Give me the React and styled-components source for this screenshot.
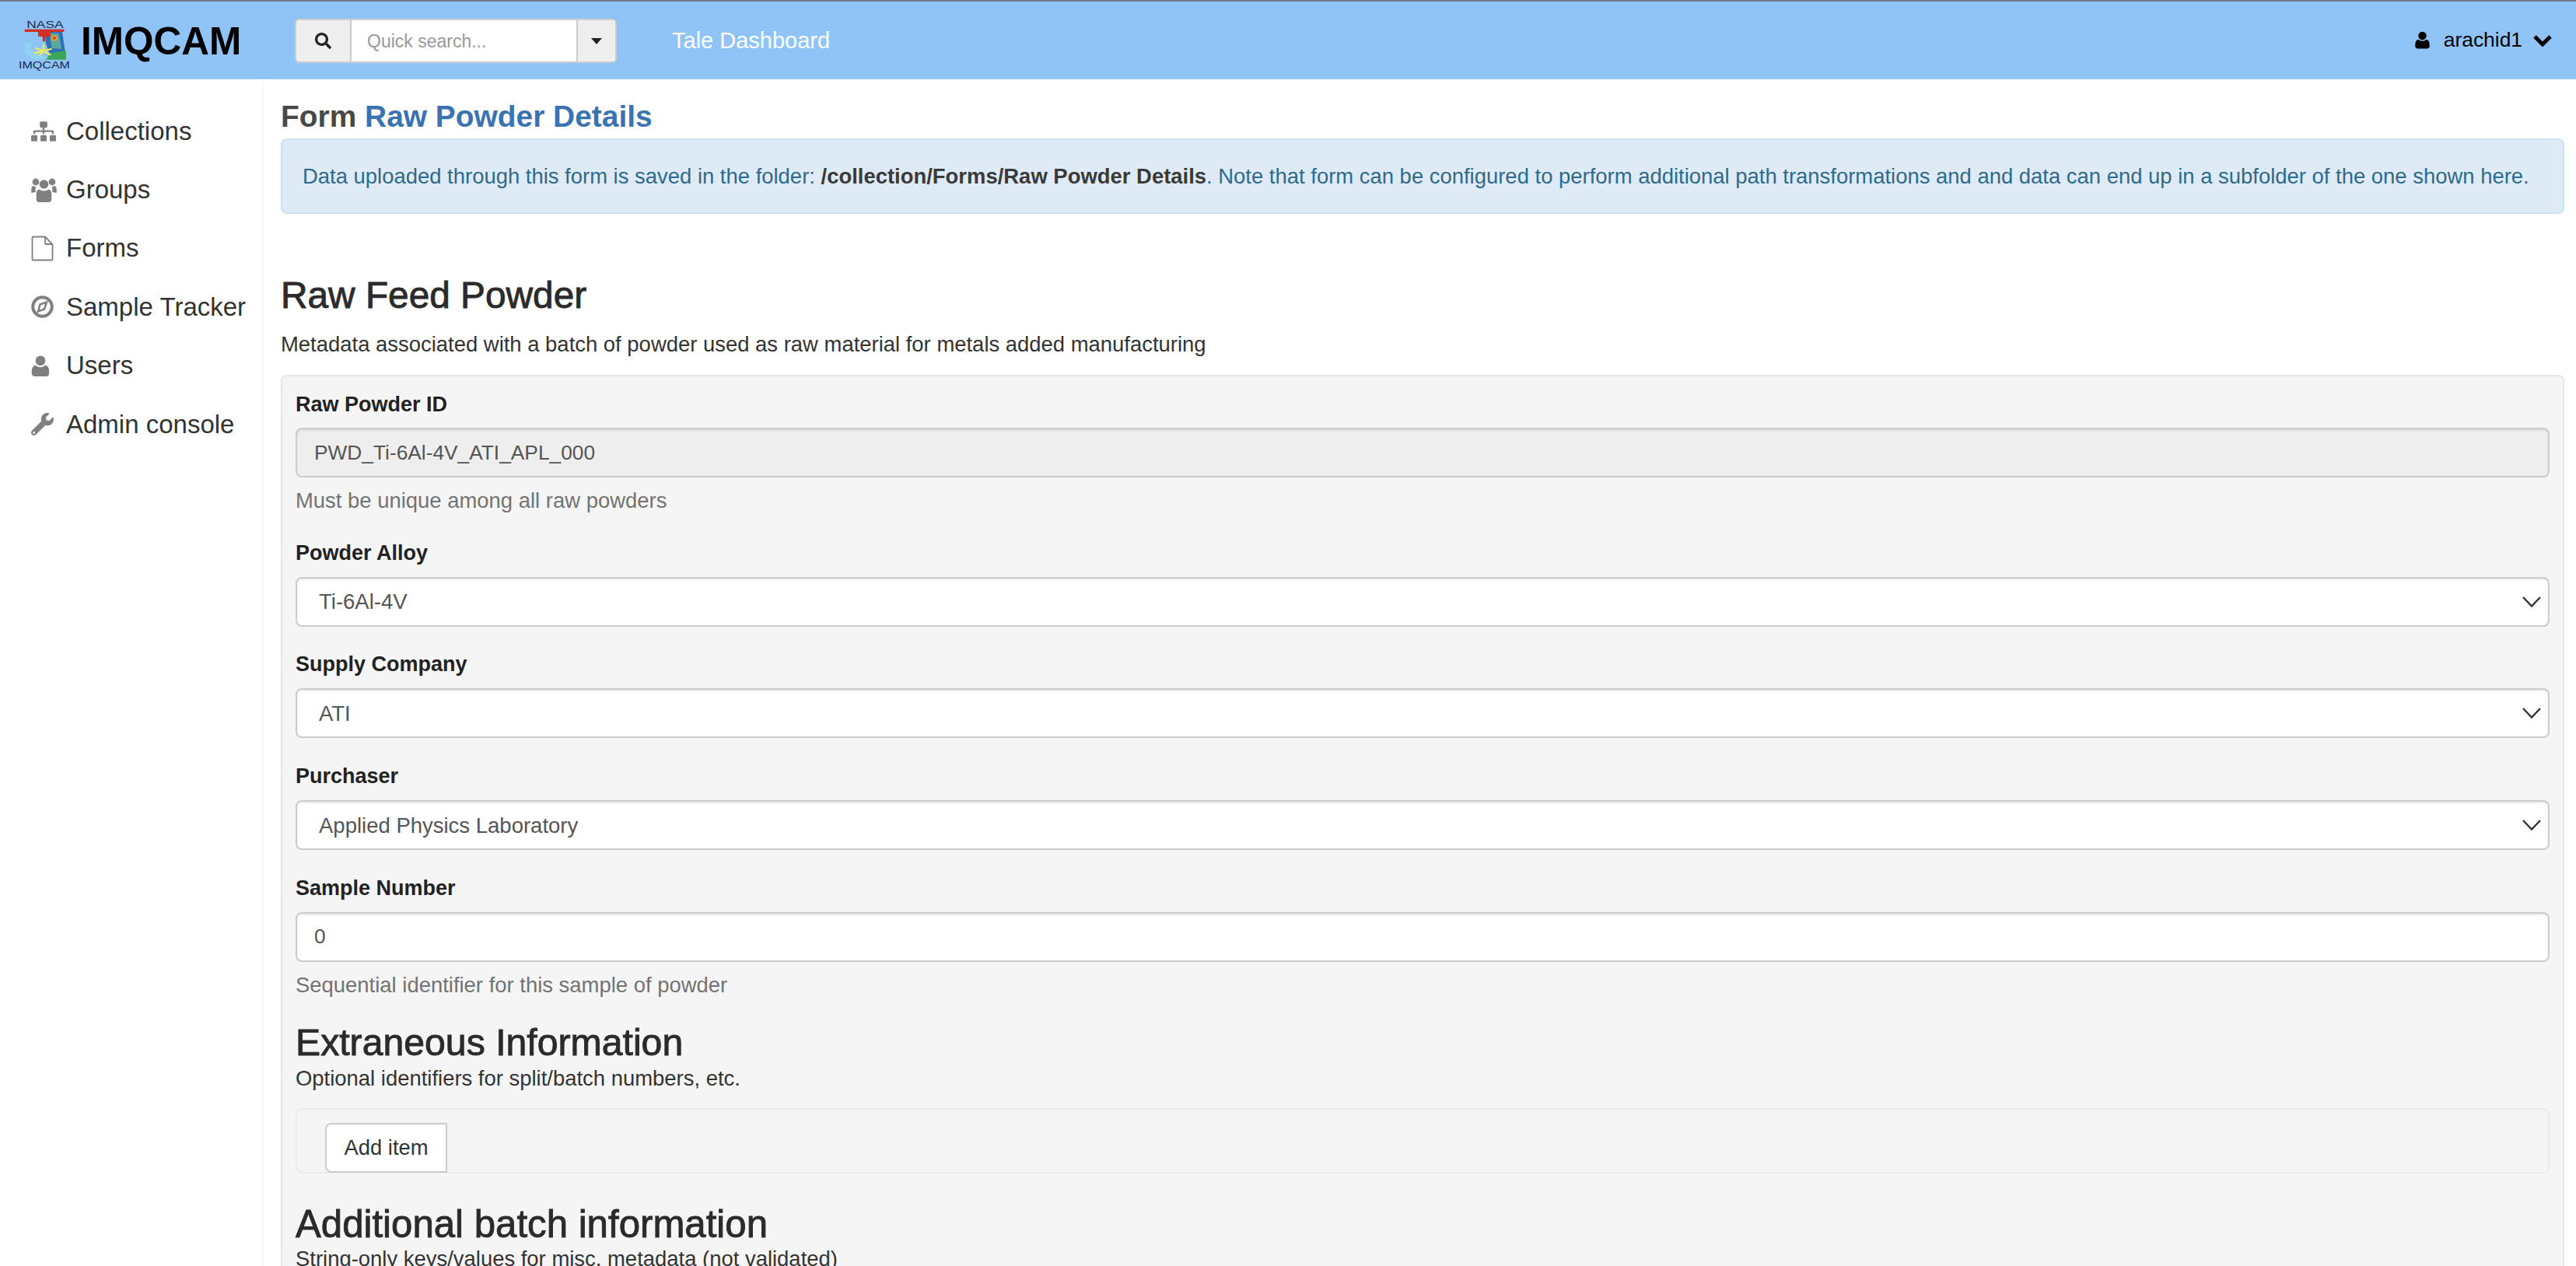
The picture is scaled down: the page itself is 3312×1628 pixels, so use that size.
import React from 'react';
import styled, { createGlobalStyle } from 'styled-components';
import { FaSitemap, FaWrench, FaSearch } from 'react-icons/fa';

const Global = createGlobalStyle`
  html, body { margin: 0; padding: 0; background: #fff; }
  * { box-sizing: border-box; }
  body { font-family: "Liberation Sans", Arial, sans-serif; color: #333; }
`;

const Page = styled.div`
  height: 100vh;
  overflow: hidden;
  display: flex;
  flex-direction: column;
`;
const Header = styled.header`
  flex: none;
  height: 102px;
  background: #91c4f6;
  border-top: 2px solid #6d7a88;
  border-bottom: 1px solid #a4cef7;
  display: flex;
  align-items: center;
  padding: 0 31px 0 22px;
`;
const Brand = styled.div`
  width: 357px;
  display: flex;
  align-items: center;
  gap: 12px;
`;
const LogoWrap = styled.div`
  flex: none;
  display: flex;
  margin-top: 15px;
`;
const BrandName = styled.span`
  font-size: 49.5px;
  font-weight: 700;
  line-height: 1;
  color: #000;
  margin-top: 3px;
`;
const SearchGroup = styled.div`
  width: 414px;
  height: 57px;
  margin-top: 2px;
  display: flex;
  border: 2px solid #ccc;
  border-radius: 6px;
  overflow: hidden;
  background: #fff;
`;
const Addon = styled.div`
  flex: none;
  width: ${p => p.$w}px;
  background: #eee;
  display: flex;
  align-items: center;
  justify-content: center;
  color: #222;
  ${p => p.$left ? 'border-left: 2px solid #ccc;' : 'border-right: 2px solid #ccc;'}
`;
const SearchInput = styled.input`
  flex: 1;
  min-width: 0;
  border: 0;
  outline: 0;
  padding: 2px 20px 0;
  font: 23px "Liberation Sans", Arial, sans-serif;
  &::placeholder { color: #999; opacity: 1; }
`;
const Caret = styled.span`
  width: 0;
  height: 0;
  border-left: 7px solid transparent;
  border-right: 7px solid transparent;
  border-top: 8px solid #222;
`;
const NavLink = styled.a`
  margin-left: 71px;
  padding-top: 2px;
  font-size: 29px;
  color: #fff;
  flex: 1;
`;
const UserMenu = styled.div`
  display: flex;
  align-items: center;
  color: #000;
  font-size: 26.4px;
`;
const UserName = styled.span`
  margin: 0 14px 0 18px;
`;
const MenuChevron = styled.svg`
  width: 24px;
  height: 16px;
  fill: none;
  stroke: currentColor;
  stroke-width: 5;
`;
const Body = styled.div`
  flex: 1;
  min-height: 0;
  display: flex;
`;
const Sidebar = styled.nav`
  flex: none;
  width: 339px;
  border-right: 2px solid #f7f7f7;
  padding-top: 29px;
`;
const SideItem = styled.a`
  height: 75.4px;
  display: flex;
  align-items: center;
  padding-left: 40px;
  font-size: 33px;
  color: #333;
`;
const SideIcon = styled.span`
  flex: none;
  width: 45px;
  display: flex;
  color: #808080;
`;
const Main = styled.main`
  flex: 1;
  min-width: 0;
  padding: 27px 15px 0 22px;
  font-size: 27.45px;
`;
const Title = styled.h1`
  margin: 0;
  font-size: 38.9px;
  line-height: 42px;
  font-weight: 700;
  color: #484848;
`;
const TitleLink = styled.span`
  color: #3a73b0;
`;
const Alert = styled.div`
  margin-top: 7px;
  height: 97px;
  display: flex;
  align-items: center;
  padding: 0 26px;
  background: #deebf6;
  border: 2px solid #c9e4f1;
  border-radius: 8px;
  color: #2f6a8d;
  white-space: nowrap;
`;
const AlertPath = styled.b`
  color: #3a3a3a;
`;
const Heading = styled.h2`
  font-size: ${p => p.$size}px;
  line-height: 52px;
  font-weight: 400;
  -webkit-text-stroke: 0.9px #2b2b2b;
  color: #2b2b2b;
  margin: ${p => p.$mt}px 0 0;
`;
const Description = styled.p`
  margin: ${p => p.$mt}px 0 0;
  line-height: 36px;
  color: #333;
`;
const Panel = styled.section`
  margin-top: 21px;
  padding: 18px 17px 0;
  background: #f5f5f5;
  border: 2px solid #e6e6e6;
  border-radius: 8px 8px 0 0;
  border-bottom: 0;
`;
const Field = styled.div`
  margin-bottom: 30.7px;
`;
const Label = styled.label`
  display: block;
  font-size: 27px;
  line-height: 36px;
  font-weight: 700;
  color: #222;
  margin-bottom: ${p => p.$mb || 13}px;
`;
const TextInput = styled.input`
  display: block;
  width: 100%;
  height: 64px;
  padding: 0 22px;
  font: 26.3px "Liberation Sans", Arial, sans-serif;
  color: #555;
  background: ${p => p.disabled ? '#eee' : '#fff'};
  border: 2px solid #ccc;
  border-radius: 8px;
  box-shadow: inset 0 2px 2px rgba(0,0,0,.075);
  outline: 0;
  opacity: 1;
  -webkit-text-fill-color: #555;
`;
const SelectWrap = styled.div`
  position: relative;
`;
const Select = styled.select`
  display: block;
  width: 100%;
  height: 64px;
  padding: 0 28px;
  font: 27.5px "Liberation Sans", Arial, sans-serif;
  color: #555;
  background: #fff;
  border: 2px solid #ccc;
  border-radius: 8px;
  box-shadow: inset 0 2px 2px rgba(0,0,0,.075);
  appearance: none;
  outline: 0;
`;
const SelectArrow = styled.svg`
  position: absolute;
  right: 11px;
  top: 25px;
  width: 24px;
  height: 14px;
  fill: none;
  stroke: #333;
  stroke-width: 2.4;
`;
const Help = styled.p`
  margin: 12px 0 0;
  line-height: 36px;
  color: #737373;
`;
const Well = styled.div`
  margin-top: 20px;
  height: 84px;
  padding: 17px 0 0 36px;
  border: 2px solid #ebebeb;
  border-radius: 8px;
`;
const Button = styled.button`
  display: block;
  width: 157px;
  height: 64px;
  padding: 0;
  font: 27.4px "Liberation Sans", Arial, sans-serif;
  color: #333;
  background: #fff;
  border: 2px solid #ccc;
  border-radius: 8px 0 0 8px;
`;

const UserGlyph = ({ w, h }) => (
  <svg width={w} height={h} viewBox="0 0 24 28" fill="currentColor" aria-hidden="true">
    <circle cx="12" cy="7" r="6.6" />
    <path d="M5.5 13.2C2.2 13.8.4 16.6.4 21.500v2.300C.4 26.500 2.200 28 4.600 28h14.800c2.400 0 4.200-1.500 4.200-4.200v-2.300c0-4.900-1.800-7.700-5.100-8.300-1.500 1.500-3.800 2.500-6.500 2.500s-5-1-6.500-2.500z" />
  </svg>
);
const GroupGlyph = () => (
  <svg width="33" height="31" viewBox="0 0 33 31" fill="currentColor" aria-hidden="true">
    <circle cx="6" cy="5" r="4.4" />
    <circle cx="27" cy="5" r="4.4" />
    <circle cx="16.5" cy="8" r="5.8" />
    <path d="M.3 19v-5c0-2.500 1.500-3.700 3-3.900 1 .9 2 1.300 3 1.300-.5 1.200-.8 2.400-.8 3.600 0 1 .1 2 .5 3-1.700.3-3.500.6-5.700 1z" />
    <path d="M32.700 19v-5c0-2.500-1.500-3.700-3-3.900-1 .9-2 1.300-3 1.300.5 1.200.8 2.400.8 3.600 0 1-.1 2-.5 3 1.700.3 3.500.6 5.700 1z" />
    <path d="M10.500 14.500c1.500 1.200 3.700 2 6 2s4.500-.8 6-2c2.300.5 3.800 2.600 3.800 6v6.500c0 2.500-1.500 4-3.800 4h-12c-2.300 0-3.800-1.500-3.800-4v-6.500c0-3.400 1.500-5.500 3.800-6z" />
  </svg>
);
const FileGlyph = () => (
  <svg width="29" height="33" viewBox="0 0 29 33" fill="none" stroke="currentColor" strokeWidth="1.8" aria-hidden="true">
    <path d="M1.500 2.500c0-.6.4-1 1-1H18l9.500 9.500v19.500c0 .6-.4 1-1 1h-24c-.6 0-1-.4-1-1z" />
    <path d="M18 1.500V9c0 1.200.8 2 2 2h7.500" />
  </svg>
);
const CompassGlyph = () => (
  <svg width="29" height="29" viewBox="0 0 29 29" aria-hidden="true">
    <circle cx="14.500" cy="14.500" r="12.300" fill="none" stroke="currentColor" strokeWidth="4" />
    <path d="M20 8.500 17 17.500 9 20.500 11.500 11.500z" fill="none" stroke="currentColor" strokeWidth="2.600" />
  </svg>
);
const LogoMark = () => (
  <svg width="70" height="70" viewBox="66 72 210 210" aria-hidden="true">
    <text x="174" y="108" textAnchor="middle" fontFamily="Liberation Sans, Arial, sans-serif" fontSize="36" textLength="142" lengthAdjust="spacingAndGlyphs" fill="#1b2b44">NASA</text>
    <polygon points="176,123 240,123 252,205 190,205 176,165" fill="#2f6fb5" />
    <polygon points="190,128 226,128 238,190 200,185" fill="#57a8a0" />
    <circle cx="210" cy="147" r="12" fill="#d9a02c" />
    <circle cx="210" cy="147" r="5" fill="#c9302c" />
    <polygon points="195,205 255,195 255,230 175,230" fill="#3ba55c" />
    <polygon points="97,165 120,165 120,190 150,212 190,225 125,228 97,205" fill="#8ed3f2" />
    <path d="M168 170v24M135 185l30 10M132 205l34-8M150 214l18-16M170 196l30-8M170 198l26 14" stroke="#f5ee4b" strokeWidth="6" fill="none" />
    <rect x="95" y="113" width="152" height="10" fill="#d22f27" />
    <polygon points="147,123 195,123 195,140 176,142 175,160 165,160 164,142 147,140" fill="#d22f27" />
    <text x="171" y="264" textAnchor="middle" fontFamily="Liberation Sans, Arial, sans-serif" fontSize="38" textLength="198" lengthAdjust="spacingAndGlyphs" fill="#1b2b44">IMQCAM</text>
  </svg>
);

const sideItems = [
  ['Collections', <FaSitemap size={32} />],
  ['Groups', <GroupGlyph />],
  ['Forms', <FileGlyph />],
  ['Sample Tracker', <CompassGlyph />],
  ['Users', <UserGlyph w={24} h={27} />],
  ['Admin console', <FaWrench size={29} />],
];

const Dropdown = ({ label, value }) => (
  <Field>
    <Label>{label}</Label>
    <SelectWrap>
      <Select defaultValue={value}><option>{value}</option></Select>
      <SelectArrow viewBox="0 0 24 14"><polyline points="1,1 12,12.5 23,1" /></SelectArrow>
    </SelectWrap>
  </Field>
);

export default function App() {
  return (
    <Page>
      <Global />
      <Header>
        <Brand>
          <LogoWrap><LogoMark /></LogoWrap>
          <BrandName>IMQCAM</BrandName>
        </Brand>
        <SearchGroup>
          <Addon $w={71}><FaSearch size={21} /></Addon>
          <SearchInput placeholder="Quick search..." />
          <Addon $w={50} $left><Caret /></Addon>
        </SearchGroup>
        <NavLink>Tale Dashboard</NavLink>
        <UserMenu>
          <UserGlyph w={19} h={23} />
          <UserName>arachid1</UserName>
          <MenuChevron viewBox="0 0 24 16"><polyline points="2,3 12,13 22,3" /></MenuChevron>
        </UserMenu>
      </Header>
      <Body>
        <Sidebar>
          {sideItems.map(([label, icon]) => (
            <SideItem key={label}><SideIcon>{icon}</SideIcon>{label}</SideItem>
          ))}
        </Sidebar>
        <Main>
          <Title>Form <TitleLink>Raw Powder Details</TitleLink></Title>
          <Alert>
            <span>Data uploaded through this form is saved in the folder: <AlertPath>/collection/Forms/Raw Powder Details</AlertPath>. Note that form can be configured to perform additional path transformations and and data can end up in a subfolder of the one shown here.</span>
          </Alert>
          <Heading $mt={79} $size={47.8}>Raw Feed Powder</Heading>
          <Description $mt={19}>Metadata associated with a batch of powder used as raw material for metals added manufacturing</Description>
          <Panel>
            <Field>
              <Label $mb={12}>Raw Powder ID</Label>
              <TextInput disabled value="PWD_Ti-6Al-4V_ATI_APL_000" readOnly />
              <Help>Must be unique among all raw powders</Help>
            </Field>
            <Dropdown label="Powder Alloy" value="Ti-6Al-4V" />
            <Dropdown label="Supply Company" value="ATI" />
            <Dropdown label="Purchaser" value="Applied Physics Laboratory" />
            <div>
              <Label>Sample Number</Label>
              <TextInput value="0" readOnly />
              <Help>Sequential identifier for this sample of powder</Help>
            </div>
            <Heading $mt={29} $size={48.2}>Extraneous Information</Heading>
            <Description $mt={3}>Optional identifiers for split/batch numbers, etc.</Description>
            <Well><Button>Add item</Button></Well>
            <Heading $mt={39} $size={49.2}>Additional batch information</Heading>
            <Description $mt={1}>String-only keys/values for misc. metadata (not validated)</Description>
          </Panel>
        </Main>
      </Body>
    </Page>
  );
}
